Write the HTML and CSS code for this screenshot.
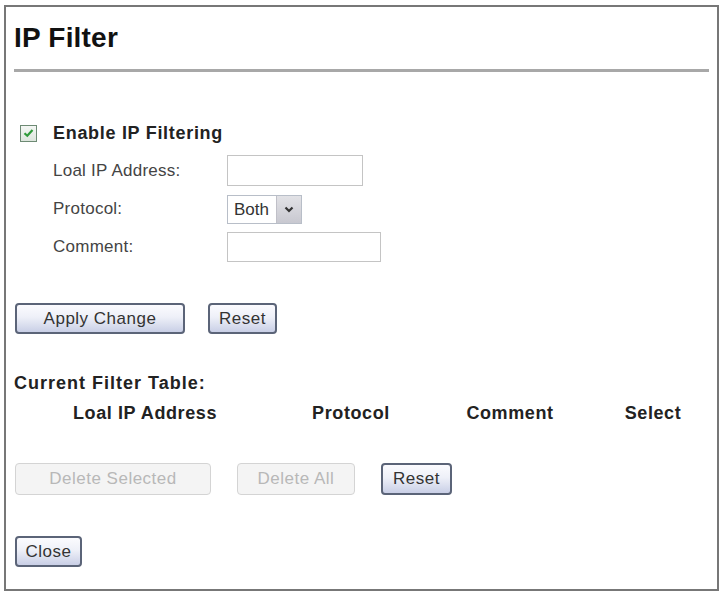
FILE: index.html
```html
<!DOCTYPE html>
<html lang="en">
<head>
  <meta charset="UTF-8">
  <meta name="viewport" content="width=device-width, initial-scale=1.0">
  <title>IP Filter</title>
  <link rel="stylesheet" href="styles.css">
</head>
<body>
  <div class="filter-window">
    <h1>IP Filter</h1>
    <hr class="title-rule">

    <form id="filterForm">
      <label class="enable-row">
        <input type="checkbox" id="enableFilter" checked>
        <span class="box">
          <svg width="11" height="10" viewBox="0 0 11 10"><path d="M1.5 5.2 L4.3 7.8 L9.5 2" fill="none" stroke="#2f9a3a" stroke-width="2.2"/></svg>
        </span>
        <strong>Enable IP Filtering</strong>
      </label>

      <div class="field-row first">
        <span class="field-label">Loal IP Address:</span>
        <input type="text" class="text-box ip-box">
      </div>
      <div class="field-row">
        <span class="field-label">Protocol:</span>
        <div class="select-box">
          <span class="select-value">Both</span>
          <span class="select-arrow">
            <svg width="10" height="7" viewBox="0 0 10 7"><path d="M1.5 1.5 L5 5 L8.5 1.5" fill="none" stroke="#333" stroke-width="2.2"/></svg>
          </span>
        </div>
      </div>
      <div class="field-row">
        <span class="field-label">Comment:</span>
        <input type="text" class="text-box comment-box">
      </div>

      <div class="button-row apply-row">
        <button type="submit" class="btn apply">Apply Change</button>
        <button type="reset" class="btn reset">Reset</button>
      </div>
    </form>

    <div class="table-title">Current Filter Table:</div>
    <div class="table-head">
      <span>Loal IP Address</span>
      <span>Protocol</span>
      <span>Comment</span>
      <span>Select</span>
    </div>

    <div class="button-row delete-row">
      <button type="button" class="btn del-selected" disabled>Delete Selected</button>
      <button type="button" class="btn del-all" disabled>Delete All</button>
      <button type="button" class="btn reset2">Reset</button>
    </div>

    <div class="button-row close-row">
      <button type="button" class="btn close">Close</button>
    </div>
  </div>
</body>
</html>
```

FILE: styles.css
```css
body {
  margin: 0;
  font-family: "Liberation Sans", Arial, sans-serif;
  background: #fff;
  color: #333;
}
.filter-window {
  margin: 5px 0 0 4px;
  border: 2px solid #777;
  padding: 15px 8px 0 8px;
  box-sizing: border-box;
  width: 715px;
  height: 586px;
}
h1 {
  margin: 0;
  font-size: 28px;
  line-height: 32px;
  font-weight: bold;
  color: #111;
  letter-spacing: 0.2px;
}
.title-rule {
  margin: 15px 0 0 0;
  width: 695px;
  height: 3px;
  border: none;
  background: #a8a8a8;
}
.enable-row {
  display: flex;
  align-items: center;
  height: 30px;
  margin-top: 46px;
  padding-left: 6px;
}
.enable-row input {
  display: none;
}
.box {
  width: 15px;
  height: 15px;
  border: 1px solid #6d8a74;
  background: linear-gradient(#f4f7f4, #dde5dd);
  display: flex;
  align-items: center;
  justify-content: center;
  margin-right: 16px;
}
.enable-row strong {
  font-size: 18px;
  color: #222;
  letter-spacing: 0.7px;
}
.field-row {
  display: flex;
  align-items: center;
  height: 38px;
  padding-left: 39px;
}
.field-row.first {
  margin-top: 3px;
  height: 39px;
}
.field-label {
  width: 174px;
  font-size: 17px;
  color: #444;
  letter-spacing: 0.25px;
}
.text-box {
  height: 31px;
  border: 1px solid #c4c4c4;
  box-sizing: border-box;
  margin: 0;
}
.ip-box {
  width: 136px;
}
.comment-box {
  width: 154px;
  height: 30px;
}
.select-box {
  display: flex;
  width: 75px;
  height: 29px;
  border: 1px solid #b8bec8;
  box-sizing: border-box;
  background: #fff;
}
.select-value {
  flex: 1;
  font-size: 17px;
  line-height: 27px;
  padding-left: 6px;
  color: #333;
}
.select-arrow {
  width: 24px;
  background: linear-gradient(#e2e2e6, #c8c8d0);
  border-left: 1px solid #c0c0c8;
  display: flex;
  align-items: center;
  justify-content: center;
}
.button-row {
  display: flex;
  align-items: center;
  padding-left: 1px;
}
.apply-row {
  margin-top: 37px;
  gap: 23px;
}
.btn {
  font-family: "Liberation Sans", Arial, sans-serif;
  font-size: 17px;
  letter-spacing: 0.5px;
  color: #333;
  height: 31px;
  padding: 0;
  border: 2px solid #5b6478;
  border-radius: 4px;
  background: linear-gradient(#fbfbfe 0%, #eef0f8 45%, #c9cfe6 100%);
  cursor: pointer;
}
.apply {
  width: 170px;
}
.reset {
  width: 69px;
}
.table-title {
  margin-top: 39px;
  font-size: 18px;
  font-weight: bold;
  line-height: 20px;
  letter-spacing: 1px;
  color: #222;
}
.table-head {
  display: grid;
  grid-template-columns: 264px 148px 170px 116px;
  margin-top: 10px;
  margin-left: -1px;
  font-size: 18px;
  font-weight: bold;
  line-height: 20px;
  letter-spacing: 0.6px;
  color: #222;
  text-align: center;
}
.delete-row {
  margin-top: 40px;
}
.btn:disabled {
  height: 32px;
  border: 1px solid #d4d4d4;
  background: #f4f4f4;
  color: #b8b8b8;
  cursor: default;
}
.del-selected {
  width: 196px;
}
.del-all {
  width: 118px;
  margin-left: 26px;
}
.reset2 {
  width: 71px;
  height: 32px;
  margin-left: 26px;
}
.close-row {
  margin-top: 41px;
}
.close {
  width: 67px;
}
```
